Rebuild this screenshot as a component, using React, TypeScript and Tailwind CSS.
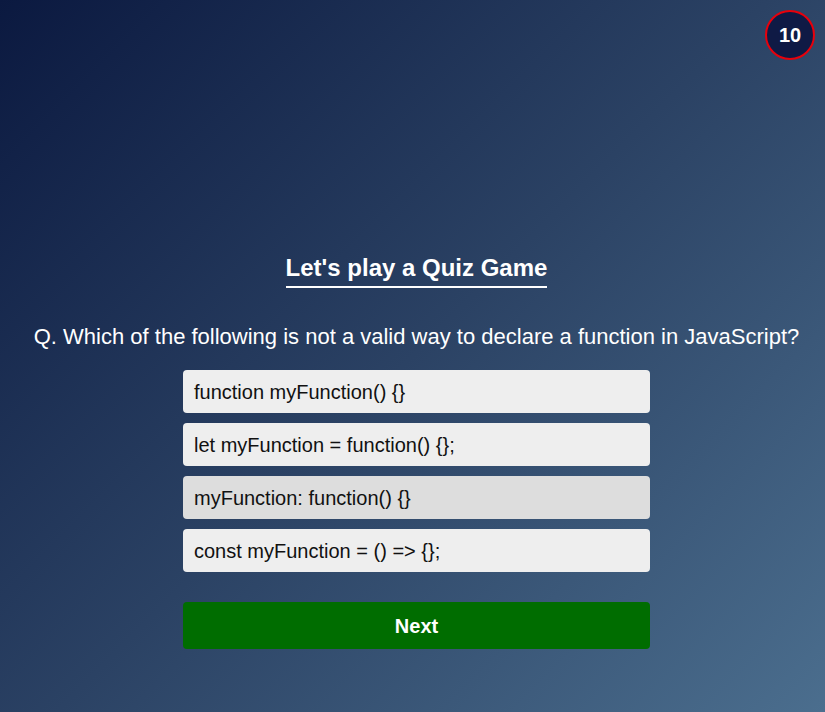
export default function App() {
  const options = [
    "function myFunction() {}",
    "let myFunction = function() {};",
    "myFunction: function() {}",
    "const myFunction = () => {};",
  ];

  return (
    <div
      className="relative min-h-[712px] w-full bg-[linear-gradient(135deg,#0b1940_0%,#2b4264_50%,#4b6e8e_100%)] text-white"
      style={{ fontFamily: '"Liberation Sans", Arial, sans-serif' }}
    >
      <div className="absolute right-[10px] top-[10px] flex h-[50px] w-[50px] items-center justify-center rounded-full border-2 border-[#e8000b] bg-[#0f1a45] text-[20px] font-bold">
        10
      </div>

      <div className="flex flex-col items-center pl-2 pt-[253px]">
        <h1 className="border-b-2 border-white pb-[3px] text-[24px] font-bold leading-[30px]">
          Let's play a Quiz Game
        </h1>

        <p className="mt-[36px] text-center text-[22px] leading-[26px]">
          Q. Which of the following is not a valid way to declare a function in JavaScript?
        </p>

        <div className="mt-[20px] flex w-[467px] flex-col gap-[10px]">
          {options.map((opt, i) => (
            <div
              key={opt}
              className={`flex h-[43px] items-center rounded-[4px] px-[11px] text-[20px] text-[#111] ${
                i === 2 ? "bg-[#dddddd]" : "bg-[#eeeeee]"
              }`}
            >
              {opt}
            </div>
          ))}
        </div>

        <button className="mt-[30px] h-[47px] w-[467px] rounded-[4px] bg-[#006d00] text-[20px] font-bold text-white">
          Next
        </button>
      </div>
    </div>
  );
}
